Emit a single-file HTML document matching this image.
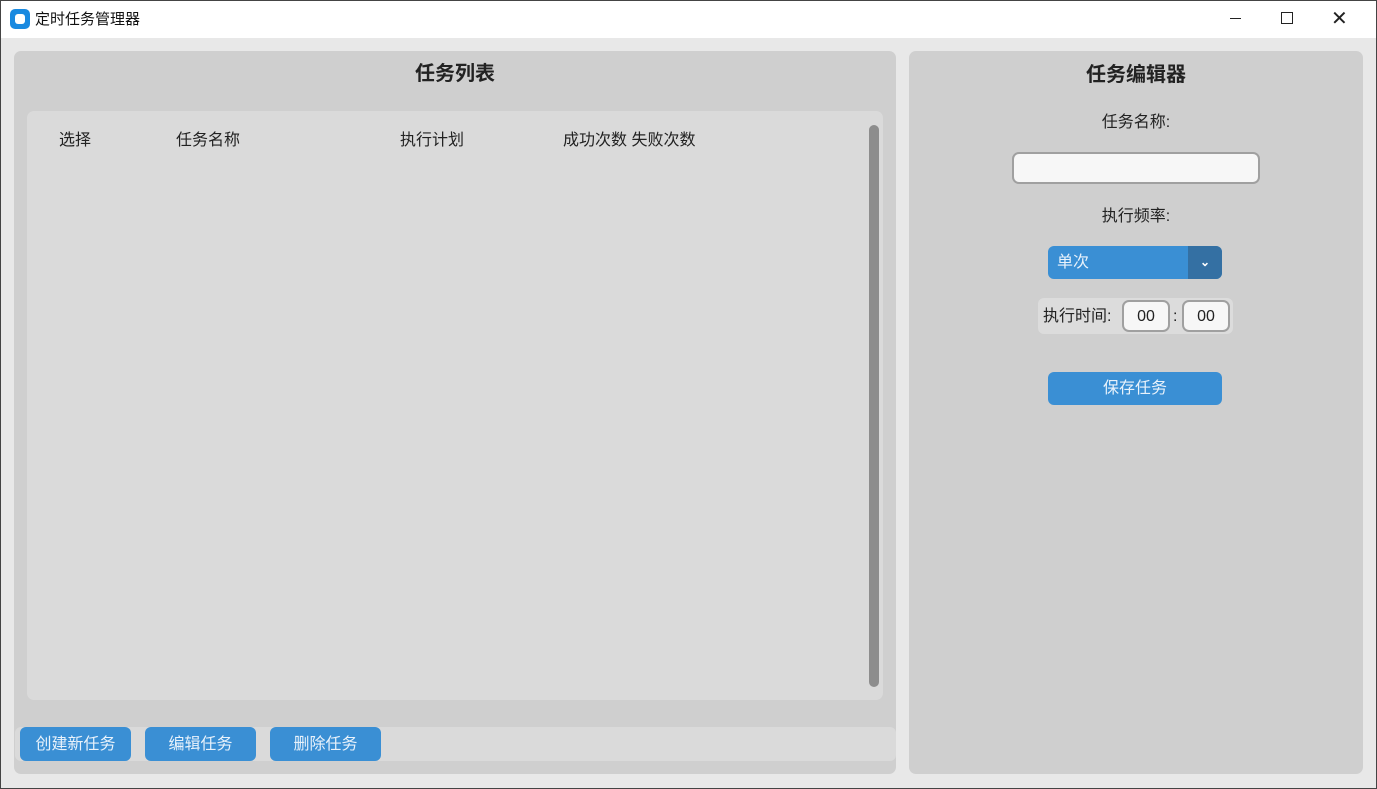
<!DOCTYPE html>
<html><head><meta charset="utf-8"><style>
*{margin:0;padding:0;box-sizing:border-box}
body{width:1377px;height:789px;background:#e8e8e8;font-family:"Liberation Sans","Noto Sans CJK SC",sans-serif;position:relative;overflow:hidden;box-shadow:inset 0 0 0 1px #444;}
.a{position:absolute}
.t{font-size:16px;color:#222;line-height:20px}
.btn{background:#3a8fd4;color:#e8f2fb;border-radius:6px;font-size:16px;text-align:center;line-height:35px}
</style></head><body>
<div class="a" style="left:1px;top:1px;width:1375px;height:37px;background:#fff"></div>
<div class="a" style="left:10px;top:9px;width:20px;height:20px;border-radius:5px;background:#1a8ae0"></div>
<div class="a" style="left:15px;top:14px;width:10px;height:10px;border-radius:3px;background:#fff"></div>
<div class="a" style="left:35px;top:10px;font-size:15px;color:#111;line-height:20px">定时任务管理器</div>
<div class="a" style="left:1230px;top:18px;width:11px;height:1px;background:#222"></div>
<div class="a" style="left:1281px;top:12px;width:12px;height:12px;border:1px solid #222"></div>
<div class="a" style="left:1331px;top:7px;font-size:20px;color:#222;line-height:24px">✕</div>

<div class="a" style="left:14px;top:51px;width:882px;height:723px;background:#cfcfcf;border-radius:7px"></div>
<div class="a" style="left:14px;top:61px;width:882px;text-align:center;font-size:20px;font-weight:bold;color:#222;line-height:26px">任务列表</div>
<div class="a" style="left:27px;top:111px;width:856px;height:589px;background:#dadada;border-radius:7px"></div>
<div class="a t" style="left:59px;top:131px">选择</div>
<div class="a t" style="left:176px;top:131px">任务名称</div>
<div class="a t" style="left:400px;top:131px">执行计划</div>
<div class="a t" style="left:563px;top:131px">成功次数 失败次数</div>
<div class="a" style="left:869px;top:125px;width:10px;height:562px;background:#8d8d8d;border-radius:5px"></div>
<div class="a" style="left:15px;top:727px;width:881px;height:34px;background:#dadada;border-radius:6px"></div>
<div class="a btn" style="left:20px;top:727px;width:111px;height:34px">创建新任务</div>
<div class="a btn" style="left:145px;top:727px;width:111px;height:34px">编辑任务</div>
<div class="a btn" style="left:270px;top:727px;width:111px;height:34px">删除任务</div>

<div class="a" style="left:909px;top:51px;width:454px;height:723px;background:#cfcfcf;border-radius:7px"></div>
<div class="a" style="left:909px;top:62px;width:454px;text-align:center;font-size:20px;font-weight:bold;color:#222;line-height:26px">任务编辑器</div>
<div class="a t" style="left:909px;top:113px;width:454px;text-align:center">任务名称:</div>
<div class="a" style="left:1012px;top:152px;width:248px;height:32px;background:#f7f7f7;border:2px solid #a0a0a0;border-radius:7px"></div>
<div class="a t" style="left:909px;top:207px;width:454px;text-align:center">执行频率:</div>
<div class="a" style="left:1048px;top:246px;width:174px;height:33px;background:#3a8fd4;border-radius:6px;overflow:hidden">
<div class="a" style="left:9px;top:0;line-height:34px;font-size:16px;color:#e8f2fb">单次</div>
<div class="a" style="left:140px;top:0;width:34px;height:33px;background:#3470a3;color:#fff;text-align:center;line-height:33px;font-size:12px;font-weight:bold">⌄</div></div>
<div class="a" style="left:1038px;top:298px;width:195px;height:36px;background:#dcdcdc;border-radius:6px"></div>
<div class="a t" style="left:1043px;top:307px">执行时间:</div>
<div class="a" style="left:1122px;top:300px;width:48px;height:32px;background:#f7f7f7;border:2px solid #a0a0a0;border-radius:7px;text-align:center;line-height:30px;font-size:16px;color:#222">00</div>
<div class="a t" style="left:1173px;top:307px">:</div>
<div class="a" style="left:1182px;top:300px;width:48px;height:32px;background:#f7f7f7;border:2px solid #a0a0a0;border-radius:7px;text-align:center;line-height:30px;font-size:16px;color:#222">00</div>
<div class="a btn" style="left:1048px;top:372px;width:174px;height:33px;line-height:34px">保存任务</div>
</body></html>
